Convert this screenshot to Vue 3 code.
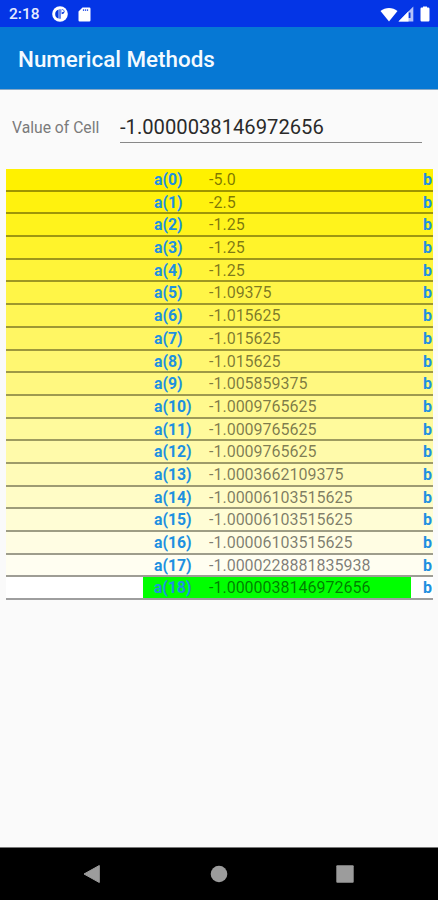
<script setup>
const current = "-1.0000038146972656";

const values = [
    "-5.0",
    "-2.5",
    "-1.25",
    "-1.25",
    "-1.25",
    "-1.09375",
    "-1.015625",
    "-1.015625",
    "-1.015625",
    "-1.005859375",
    "-1.0009765625",
    "-1.0009765625",
    "-1.0009765625",
    "-1.0003662109375",
    "-1.00006103515625",
    "-1.00006103515625",
    "-1.00006103515625",
    "-1.0000228881835938",
    current,
];

// rows fade from yellow to white
function rowStyle(index) {
    const t = index / (values.length - 1);
    return {
        backgroundColor: `rgb(255, ${Math.round(241 + 14 * t)}, ${Math.round(255 * t)})`,
    };
}
</script>

<template>
    <div class="screen">
        <div class="status">
            <span class="status__time">2:18</span>
            <svg class="status__app" viewBox="0 0 16 16" width="16" height="16">
                <circle cx="8" cy="8" r="7.8" fill="#fff" />
                <path d="M6.6 3.4v9.2a4.800 4.800 0 0 1 0-9.200z" fill="#0638e0" />
                <path d="M8 3.200v9.600" stroke="#0638e0" stroke-width="1.200" />
                <path d="M9.600 3.200a3 2.600 0 0 1 3 2.600a3 2.600 0 0 1-3 2.400z" fill="#0638e0" />
                <circle cx="10.700" cy="5.200" r="1.100" fill="#fff" />
            </svg>
            <svg class="status__card" viewBox="0 0 13 15" width="13" height="15">
                <path
                    d="M4.5 0.5H11.3a1.200 1.200 0 0 1 1.200 1.200v11.600a1.200 1.200 0 0 1-1.200 1.200H1.700a1.200 1.200 0 0 1-1.200-1.200V4.500z"
                    fill="#fff"
                />
                <path d="M5.500 2.300v1.700M7.500 2.300v1.700M9.500 2.300v1.700" stroke="#3a5fe8" stroke-width="1.200" />
            </svg>
            <div class="status__right">
                <svg viewBox="0 0 18 15" width="18" height="15">
                    <path d="M9 14.500L0.500 4C5.300-0.100 12.700-0.100 17.500 4z" fill="#fff" />
                </svg>
                <svg viewBox="0 0 16 16" width="16" height="16">
                    <path d="M15.300 0.500V15.500H0.500z" fill="#b5c2f8" />
                    <path d="M10.500 5.200V15.500H0.500z" fill="#fff" />
                    <path d="M11.600 6.500v5.500" stroke="#0638e0" stroke-width="1.800" />
                </svg>
                <svg class="status__battery" viewBox="0 0 10 16" width="10" height="16">
                    <path
                        d="M3 0.500h4v1h1.300a1.200 1.200 0 0 1 1.200 1.200v11.600a1.200 1.200 0 0 1-1.200 1.200H1.700a1.200 1.200 0 0 1-1.200-1.200V2.700a1.200 1.200 0 0 1 1.200-1.200H3z"
                        fill="#fff"
                    />
                </svg>
            </div>
        </div>

        <header class="toolbar">
            <h1 class="toolbar__title">Numerical Methods</h1>
        </header>

        <main class="content">
            <div class="field">
                <label class="field__label" for="cell">Value of Cell</label>
                <input id="cell" class="field__input" type="text" :value="current" />
            </div>

            <div class="table">
                <div
                    v-for="(value, i) in values"
                    :key="i"
                    class="row"
                    :class="{ 'row--selected': value === current }"
                    :style="rowStyle(i)"
                >
                    <div class="row__cell">
                        <span class="row__name">a({{ i }})</span>
                        <span class="row__value">{{ value }}</span>
                    </div>
                    <span class="row__next">b</span>
                </div>
            </div>
        </main>

        <nav class="nav">
            <svg viewBox="0 0 18 20" width="18" height="20">
                <path d="M16.300 1.500v17L1 10z" fill="#9c9c9c" stroke="#9c9c9c" stroke-linejoin="round" />
            </svg>
            <svg viewBox="0 0 18 18" width="18" height="18">
                <circle cx="9" cy="9" r="8.300" fill="#9c9c9c" />
            </svg>
            <svg viewBox="0 0 18 18" width="18" height="18">
                <rect x="0.300" y="0.300" width="17.400" height="17.400" rx="1" fill="#9c9c9c" />
            </svg>
        </nav>
    </div>
</template>

<style>
body {
    background: #fafafa;
}
</style>

<style scoped>
.screen {
    display: flex;
    flex-direction: column;
    height: 900px;
    overflow: hidden;
    background: #fafafa;
    font-family: Roboto, "Liberation Sans", sans-serif;
}

.status {
    display: flex;
    align-items: center;
    height: 27px;
    padding: 1px 8px 0 9px;
    box-sizing: border-box;
    background: #0435e6;
    color: #e6ebff;
}

.status__time {
    width: 43px;
    font-size: 15.5px;
    font-weight: 500;
}

.status__card {
    margin-left: 10px;
}

.status__right {
    display: flex;
    align-items: center;
    margin-left: auto;
}

.status__battery {
    margin-left: 6px;
}

.toolbar {
    display: flex;
    align-items: center;
    height: 63px;
    padding: 2px 18px 0;
    box-sizing: border-box;
    background: #0678d4;
    border-bottom: 1px solid #87a9c7;
}

.toolbar__title {
    margin: 0;
    color: #f4faff;
    font-size: 22.4px;
    font-weight: 500;
}

.content {
    flex: 1;
    padding: 19px 5px 0 6px;
}

.field {
    display: flex;
    align-items: center;
    height: 34px;
    padding: 0 11px 0 6px;
}

.field__label {
    width: 108px;
    padding-top: 2px;
    color: #7b7b7b;
    font-size: 15.7px;
}

.field__input {
    flex: 1;
    min-width: 0;
    height: 34px;
    padding: 2px 0 0;
    box-sizing: border-box;
    border: 0;
    border-bottom: 1.5px solid #888;
    outline: 0;
    background: none;
    color: #2a2a2a;
    font: 20.2px Roboto, "Liberation Sans", sans-serif;
}

.table {
    margin-top: 26px;
}

.row {
    display: flex;
    height: 22.69px;
    padding-left: 137px;
    box-sizing: border-box;
    border-bottom: 2px solid rgba(0, 0, 0, 0.38);
    color: #1e90e0;
    font-size: 16px;
    line-height: 22.6px;
}

.row__cell {
    display: flex;
    width: 268px;
    padding-left: 11px;
    box-sizing: border-box;
}

.row--selected .row__cell {
    background: #00ff00;
}

.row__name {
    width: 55px;
    font-size: 15.8px;
    font-weight: 700;
}

.row__value {
    color: rgba(0, 0, 0, 0.52);
}

.row__next {
    margin-left: 12px;
    font-weight: 700;
}

.nav {
    display: flex;
    align-items: center;
    justify-content: space-between;
    height: 53px;
    padding: 0 84px 0 83px;
    box-sizing: border-box;
    border-top: 1px solid #777;
    background: #000;
}
</style>
